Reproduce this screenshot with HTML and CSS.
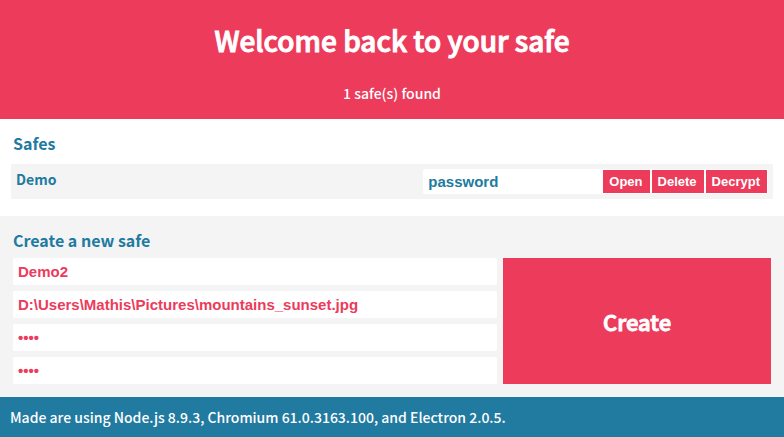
FILE: index.html
```html
<!DOCTYPE html>
<html lang="en">
<head>
<meta charset="utf-8">
<meta name="viewport" content="width=device-width, initial-scale=1">
<title>Safe</title>
<link rel="stylesheet" href="styles.css">
</head>
<body>
<header class="hero">
  <h1 class="hero-title">Welcome back to your safe</h1>
  <p class="hero-count">1 safe(s) found</p>
</header>
<main>
  <section class="safes">
    <h2 class="section-title">Safes</h2>
    <div class="safe">
      <label class="safe-name" for="safe-password">Demo</label>
      <form class="safe-form">
        <input class="field safe-password" id="safe-password" type="text" value="password">
        <button class="action" type="button">Open</button>
        <button class="action" type="button">Delete</button>
        <button class="action" type="button">Decrypt</button>
      </form>
    </div>
  </section>
  <section class="new-safe">
    <h2 class="section-title">Create a new safe</h2>
    <form class="new-form">
      <div class="new-fields">
        <input class="field" type="text" aria-label="Name" value="Demo2">
        <input class="field" type="text" aria-label="Picture" value="D:\Users\Mathis\Pictures\mountains_sunset.jpg">
        <input class="field" type="password" aria-label="Password" value="safe">
        <input class="field" type="password" aria-label="Confirm password" value="safe">
      </div>
      <button class="create" type="button">Create</button>
    </form>
  </section>
</main>
<footer class="footer">Made are using Node.js 8.9.3, Chromium 61.0.3163.100, and Electron 2.0.5.</footer>
</body>
</html>
```

FILE: styles.css
```css
* {
  box-sizing: border-box;
}

body {
  margin: 0;
  color: #217aa0;
  background: #f4f4f4;
  font-family: "Noto Sans CJK SC", sans-serif;
  font-size: 14px;
  font-weight: 500;
  line-height: 20px;
}

h1, h2, p {
  margin: 0;
}

.hero {
  padding: 19px 10px 16px;
  color: #fff;
  background: #ec3b5b;
  text-align: center;
}

.hero-title {
  font-size: 28px;
  font-weight: 500;
  line-height: 42px;
  -webkit-text-stroke: 1px #fff;
}

.hero-count {
  margin-top: 22px;
}

.safes {
  padding: 14px 11px 17px;
  background: #fff;
}

.section-title {
  margin: 0 2px;
  font-size: 16px;
  font-weight: 700;
  line-height: 20px;
}

.safe {
  display: flex;
  align-items: flex-start;
  justify-content: space-between;
  margin-top: 11px;
  padding: 5px;
  background: #f4f4f4;
}

.safe-name {
  font-weight: 700;
}

.safe-form {
  display: flex;
  align-items: center;
}

.field {
  width: 100%;
  height: 27px;
  padding: 0 5px;
  border: 0;
  border-radius: 2px;
  color: #ec3b5b;
  background: #fff;
  font: bold 15px "Liberation Sans", sans-serif;
}

.safe-password {
  width: 179px;
  height: 25px;
  color: #217aa0;
}

.action {
  height: 25px;
  padding: 0 7px 0 6px;
  border: 1px solid #fff;
  color: #fff;
  background: #ec3b5b;
  font: bold 13px "Liberation Sans", sans-serif;
}

.new-safe {
  padding: 14px 13px 13px;
}

.new-safe .section-title {
  margin: 0;
}

.new-form {
  display: flex;
  gap: 6px;
  margin-top: 8px;
}

.new-fields {
  display: flex;
  flex: 484;
  flex-direction: column;
  gap: 6px;
}

.create {
  flex: 268;
  padding: 0;
  border: 0;
  color: #fff;
  background: #ec3b5b;
  font-family: inherit;
  font-size: 22px;
  font-weight: 500;
  -webkit-text-stroke: 1px #fff;
}

.footer {
  padding: 10px;
  color: #fff;
  background: #217aa0;
}
```
